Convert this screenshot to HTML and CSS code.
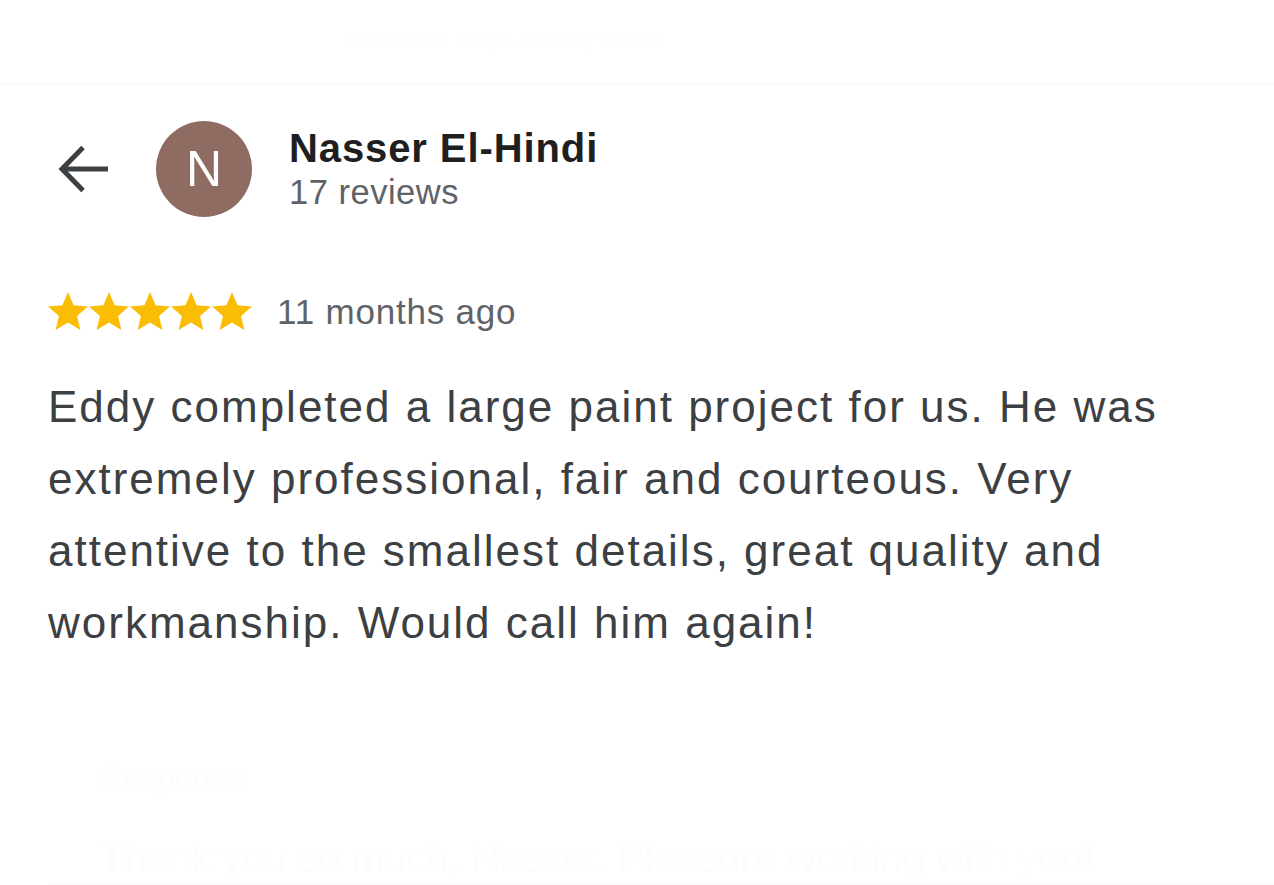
FILE: index.html
```html
<!DOCTYPE html>
<html lang="en">
<head>
<meta charset="utf-8">
<title>Review</title>
<link rel="stylesheet" href="styles.css">
</head>
<body>
<div class="page">
  <header class="topbar">
    <span class="ghost ghost-top">Reviews for Eddy's Painting Service</span>
  </header>
  <main class="review">
    <div class="profile">
      <svg class="back" width="52" height="50" viewBox="0 0 52 50" aria-hidden="true">
        <path d="M50 25H5" fill="none" stroke="#3c4043" stroke-width="5"/>
        <path d="M25 3.5L4 25L25 46.5" fill="none" stroke="#3c4043" stroke-width="5"/>
      </svg>
      <div class="avatar">N</div>
      <div class="who">
        <div class="name">Nasser El-Hindi</div>
        <div class="count">17 reviews</div>
      </div>
    </div>
    <div class="meta">
      <div class="stars">
        <svg viewBox="2 2 20 19.3" width="40" height="38.6"><path d="M12 17.27L18.18 21l-1.64-7.03L22 9.24l-7.19-.61L12 2 9.19 8.63 2 9.24l5.46 4.73L5.82 21z" fill="#fbbc04"/></svg>
        <svg viewBox="2 2 20 19.3" width="40" height="38.6"><path d="M12 17.27L18.18 21l-1.64-7.03L22 9.24l-7.19-.61L12 2 9.19 8.63 2 9.24l5.46 4.73L5.82 21z" fill="#fbbc04"/></svg>
        <svg viewBox="2 2 20 19.3" width="40" height="38.6"><path d="M12 17.27L18.18 21l-1.64-7.03L22 9.24l-7.19-.61L12 2 9.19 8.63 2 9.24l5.46 4.73L5.82 21z" fill="#fbbc04"/></svg>
        <svg viewBox="2 2 20 19.3" width="40" height="38.6"><path d="M12 17.27L18.18 21l-1.64-7.03L22 9.24l-7.19-.61L12 2 9.19 8.63 2 9.24l5.46 4.73L5.82 21z" fill="#fbbc04"/></svg>
        <svg viewBox="2 2 20 19.3" width="40" height="38.6"><path d="M12 17.27L18.18 21l-1.64-7.03L22 9.24l-7.19-.61L12 2 9.19 8.63 2 9.24l5.46 4.73L5.82 21z" fill="#fbbc04"/></svg>
      </div>
      <span class="when">11 months ago</span>
    </div>
    <p class="text">Eddy completed a large paint project for us. He was extremely professional, fair and courteous. Very attentive to the smallest details, great quality and workmanship. Would call him again!</p>
    <div class="response">
      <div class="ghost ghost-title">Response</div>
      <div class="ghost ghost-body">Thank you so much, Nasser. Pleasure working with you!</div>
    </div>
  </main>
  <div class="bottombar"></div>
</div>
</body>
</html>
```

FILE: styles.css
```css
html, body {
  margin: 0;
  padding: 0;
  background: #ffffff;
}

.page {
  width: 1274px;
  height: 885px;
  overflow: hidden;
  display: flex;
  flex-direction: column;
  font-family: "Liberation Sans", Arial, Helvetica, sans-serif;
}

.topbar {
  height: 84px;
  flex: none;
  border-bottom: 1px solid #f8f8f8;
  display: flex;
  align-items: center;
  padding-left: 345px;
  box-sizing: border-box;
}

.ghost {
  color: #fdfdfd;
}

.ghost-top {
  font-size: 20px;
}

.review {
  flex: 1;
  padding-left: 48px;
}

.profile {
  display: flex;
  align-items: center;
  margin-top: 37px;
  padding-left: 10px;
}

.back {
  flex: none;
  display: block;
}

.avatar {
  flex: none;
  width: 96px;
  height: 96px;
  border-radius: 50%;
  background: #8e6c62;
  color: #ffffff;
  font-size: 50px;
  display: flex;
  align-items: center;
  justify-content: center;
  margin-left: 46px;
}

.who {
  margin-left: 37px;
  display: flex;
  flex-direction: column;
}

.name {
  font-size: 40px;
  font-weight: bold;
  letter-spacing: 0.9px;
  color: #1f1f1f;
  line-height: 46px;
}

.count {
  font-size: 34.5px;
  letter-spacing: 0.5px;
  color: #5f6368;
  line-height: 42px;
}

.meta {
  display: flex;
  align-items: center;
  margin-top: 74px;
}

.stars {
  display: flex;
  gap: 1px;
}

.stars svg {
  display: block;
}

.when {
  margin-left: 25px;
  font-size: 35px;
  letter-spacing: 0.8px;
  color: #5f6368;
  position: relative;
  top: 1px;
}

.text {
  margin: 40px 0 0;
  width: 1180px;
  font-size: 44px;
  letter-spacing: 2px;
  line-height: 72px;
  color: #3c4043;
}

.response {
  margin-top: 100px;
  padding-left: 52px;
}

.ghost-title {
  font-size: 32px;
}

.ghost-body {
  margin-top: 40px;
  font-size: 40px;
}

.bottombar {
  flex: none;
  height: 10px;
  margin-left: 48px;
  background: linear-gradient(#ffffff, #f1f2f4);
}
```
